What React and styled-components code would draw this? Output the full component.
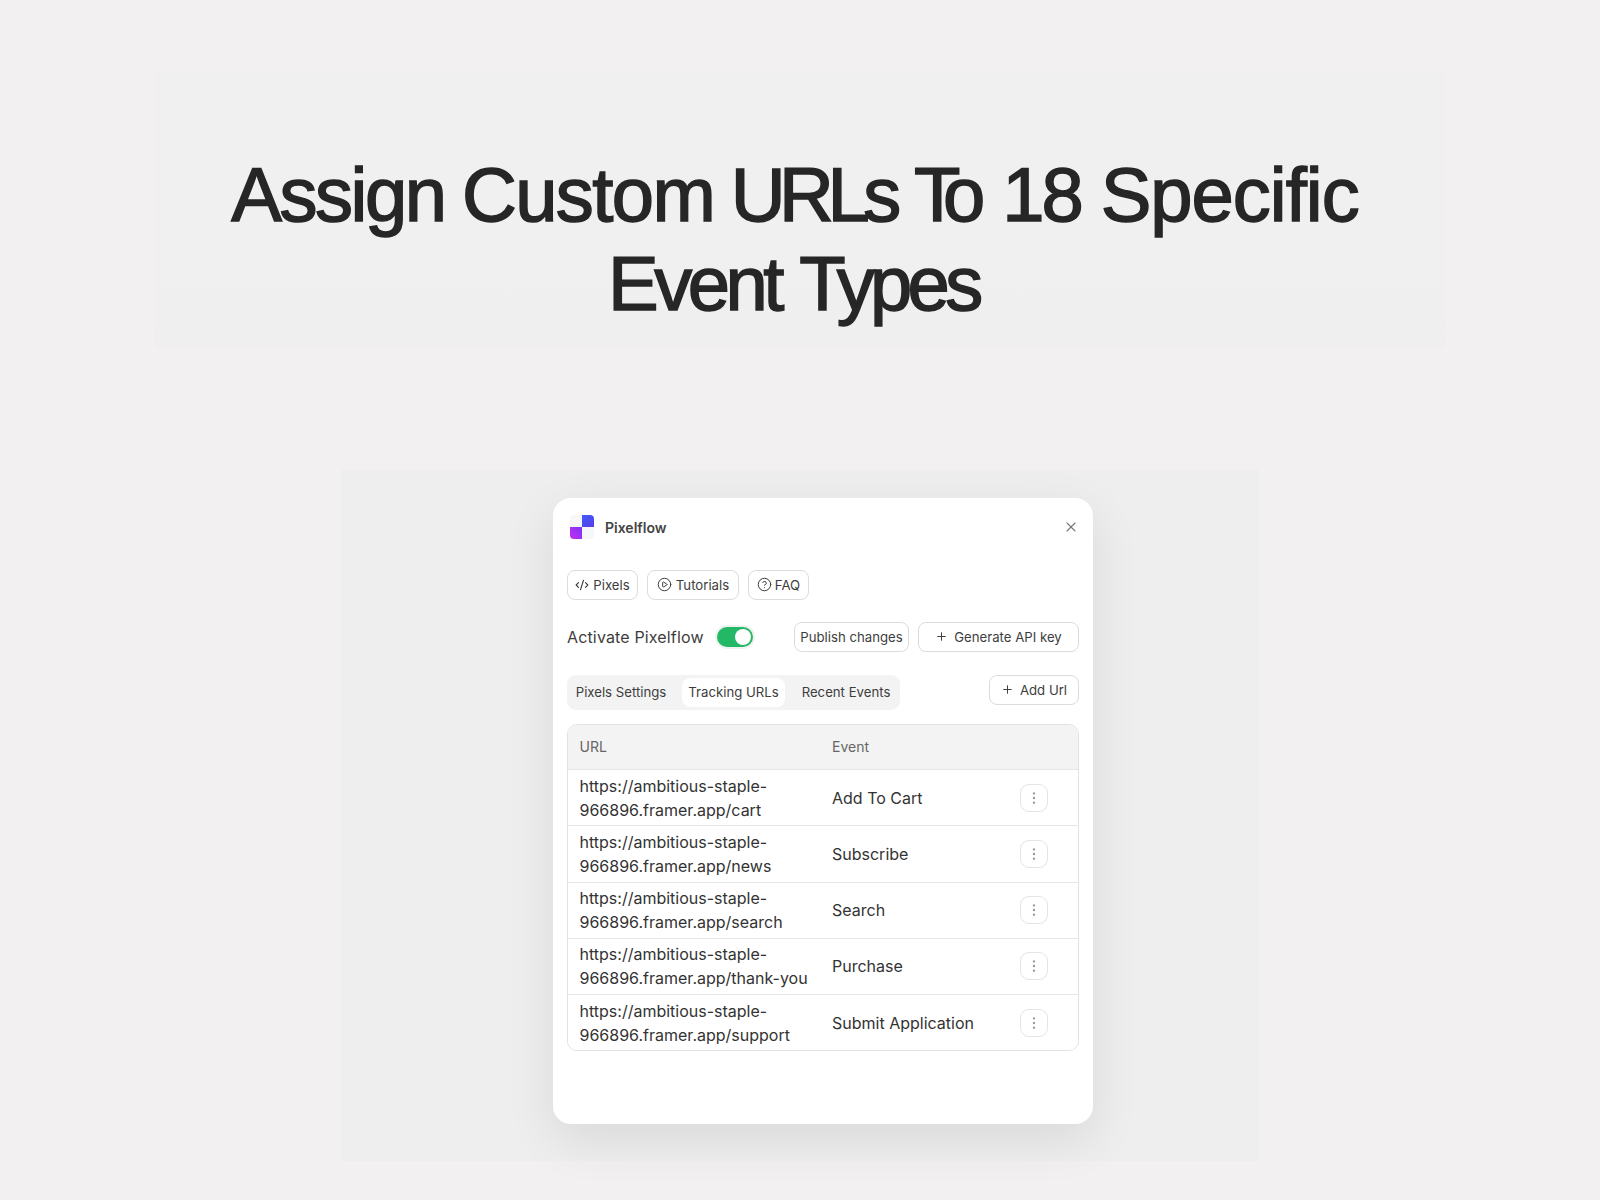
import React from "react";
import styled, { createGlobalStyle } from "styled-components";
import { CodeXml, CirclePlay, CircleHelp, Plus, X, EllipsisVertical } from "lucide-react";

const Global = createGlobalStyle`
  html, body { margin: 0; padding: 0; background: #f2f0f1; }
  * { box-sizing: border-box; }
  body { font-family: Inter, "Liberation Sans", sans-serif; color: #333; }
`;

const Page = styled.div`
  width: 1600px;
  height: 1200px;
  overflow: hidden;
  padding-top: 70px;
  display: flex;
  flex-direction: column;
  align-items: center;
`;

const Hero = styled.section`
  width: 1290px;
  height: 277px;
  padding: 80px 12px 0 0;
  background: linear-gradient(#f0f0f0, #f0f0f0 60%, #efefef);
`;

const Title = styled.h1`
  margin: 0;
  text-align: center;
  font-family: "Liberation Sans", Arial, sans-serif;
  font-weight: 400;
  -webkit-text-stroke: 1.5px #262626;
  font-size: 76px;
  line-height: 89px;
  letter-spacing: -3.1px;
  font-kerning: normal;
  color: #262626;
`;

const Word = styled.span`
  letter-spacing: ${(p) => p.$ls}px;
  margin-right: ${(p) => -3.1 - p.$ls + (p.$extra || 0)}px;
`;

const Stage = styled.section`
  width: 918px;
  height: 691px;
  margin-top: 123px;
  padding: 28px 166px 37px 212px;
  background: #eeeeee;
`;

const Card = styled.div`
  width: 540px;
  height: 626px;
  background: #fff;
  border-radius: 18px;
  padding: 0 14px;
  box-shadow: 0 16px 50px rgba(0, 0, 0, 0.09);
`;

const Header = styled.header`
  height: 58px;
  display: flex;
  align-items: center;
  gap: 11px;
  padding: 0 0 0 3px;
`;

const Brand = styled.span`
  font-size: 14px;
  font-weight: 600;
  color: #444;
  flex: 1;
`;

const Close = styled.span`
  display: flex;
  color: #777;
`;

const Chips = styled.nav`
  margin-top: 14px;
  display: flex;
  gap: 9px;
`;

const Button = styled.button`
  height: 30px;
  width: ${(p) => p.$w}px;
  padding: 0 0 1px;
  display: inline-flex;
  align-items: center;
  justify-content: center;
  gap: ${(p) => p.$gap || 4}px;
  background: #fff;
  border: 1.5px solid #dcdcdc;
  border-radius: 8px;
  font-family: Inter, "Liberation Sans", sans-serif;
  font-size: 13.2px;
  color: #3d3d3d;
`;

const Controls = styled.div`
  margin-top: 22px;
  display: flex;
  align-items: center;
`;

const Label = styled.span`
  font-size: 16px;
  color: #3d3d3d;
  letter-spacing: 0.15px;
  width: 150px;
`;

const Toggle = styled.span`
  width: 36px;
  height: 20px;
  border-radius: 10px;
  background: #22b866;
  box-shadow: 0 0 0 2px #eef3f0;
  display: flex;
  align-items: center;
  justify-content: flex-end;
  padding-right: 2px;
`;

const Knob = styled.span`
  width: 16px;
  height: 16px;
  border-radius: 50%;
  background: #fff;
`;

const Spacer = styled.span`
  flex: 1;
`;

const Actions = styled.div`
  display: flex;
  gap: 9px;
`;

const TabRow = styled.div`
  margin-top: 23px;
  display: flex;
  align-items: flex-start;
  justify-content: space-between;
`;

const Tabs = styled.div`
  width: 333px;
  height: 35px;
  background: #f3f3f3;
  border-radius: 9px;
  padding: 3px;
  display: flex;
  gap: 10px;
`;

const Tab = styled.span`
  height: 29px;
  width: ${(p) => p.$w}px;
  padding-bottom: 1px;
  border-radius: 8px;
  background: ${(p) => (p.$active ? "#fff" : "transparent")};
  display: flex;
  align-items: center;
  justify-content: center;
  font-size: 13.2px;
  color: #3d3d3d;
`;

const Table = styled.div`
  margin-top: 14px;
  width: 512px;
  border: 1.5px solid #e2e2e2;
  border-radius: 10px;
  overflow: hidden;
`;

const Row = styled.div`
  display: grid;
  grid-template-columns: 252.5px 1fr 28px;
  align-items: center;
  height: ${(p) => (p.$head ? 44 : 56.25)}px;
  padding: 0 30px ${(p) => (p.$head ? 2 : 0)}px 11.5px;
  background: ${(p) => (p.$head ? "#f3f3f3" : "#fff")};
  border-top: ${(p) => (p.$first ? "none" : "1.5px solid #e6e6e6")};
`;

const HeadCell = styled.span`
  font-size: 14px;
  color: #666;
`;

const Cell = styled.span`
  font-size: 16px;
  line-height: 24px;
  color: #333;
`;

const More = styled.span`
  width: 28px;
  height: 28px;
  border: 1.5px solid #e4e4e4;
  border-radius: 9px;
  display: flex;
  align-items: center;
  justify-content: center;
  color: #999;
`;

const Logo = () => (
  <svg width="24" height="24" viewBox="0 0 24 24">
    <defs>
      <linearGradient id="lg" x1="0" y1="1" x2="1" y2="0">
        <stop offset="0" stopColor="#c92df0" />
        <stop offset="1" stopColor="#7a35f5" />
      </linearGradient>
      <linearGradient id="lb" x1="0" y1="0" x2="1" y2="1">
        <stop offset="0" stopColor="#3f5cf2" />
        <stop offset="1" stopColor="#5a3df0" />
      </linearGradient>
    </defs>
    <rect x="0" y="0" width="24" height="24" rx="4" fill="#f7f7fa" />
    <path d="M12 0h8a4 4 0 0 1 4 4v8H12z" fill="url(#lb)" />
    <path d="M0 12h12v12H4a4 4 0 0 1-4-4z" fill="url(#lg)" />
  </svg>
);

const rows = [
  ["cart", "Add To Cart"],
  ["news", "Subscribe"],
  ["search", "Search"],
  ["thank-you", "Purchase"],
  ["support", "Submit Application"],
];

export default function App() {
  return (
    <Page>
      <Global />
      <Hero>
        <Title>
          <Word $ls={-2.5}>Assign</Word> <Word $ls={-1.6}>Custom</Word>{" "}
          <Word $ls={-6.5} $extra={-2}>URLs</Word>{" "}
          <Word $ls={-9} $extra={2}>To</Word> <Word $ls={-3.1} $extra={2}>18</Word>{" "}
          <Word $ls={-1}>Specific</Word>
          <br />
          <Word $ls={-4.5}>Event</Word> <Word $ls={-4.7}>Types</Word>
        </Title>
      </Hero>
      <Stage>
        <Card>
          <Header>
            <Logo />
            <Brand>Pixelflow</Brand>
            <Close>
              <X size={16} strokeWidth={1.6} />
            </Close>
          </Header>
          <Chips>
            <Button $w={71}>
              <CodeXml size={14} strokeWidth={2} />
              Pixels
            </Button>
            <Button $w={92}>
              <CirclePlay size={15} strokeWidth={1.6} />
              Tutorials
            </Button>
            <Button $w={61} $gap={3}>
              <CircleHelp size={15} strokeWidth={1.6} />
              FAQ
            </Button>
          </Chips>
          <Controls>
            <Label>Activate Pixelflow</Label>
            <Toggle>
              <Knob />
            </Toggle>
            <Spacer />
            <Actions>
              <Button $w={115}>Publish changes</Button>
              <Button $w={161} $gap={6}>
                <Plus size={13} strokeWidth={1.8} />
                Generate API key
              </Button>
            </Actions>
          </Controls>
          <TabRow>
            <Tabs>
              <Tab $w={102}>Pixels Settings</Tab>
              <Tab $w={103} $active>
                Tracking URLs
              </Tab>
              <Tab $w={102}>Recent Events</Tab>
            </Tabs>
            <Button $w={90} $gap={6}>
              <Plus size={13} strokeWidth={1.8} />
              Add Url
            </Button>
          </TabRow>
          <Table>
            <Row $head $first>
              <HeadCell>URL</HeadCell>
              <HeadCell>Event</HeadCell>
            </Row>
            {rows.map(([slug, event]) => (
              <Row key={slug}>
                <Cell>
                  https://ambitious-staple-
                  <br />
                  966896.framer.app/{slug}
                </Cell>
                <Cell>{event}</Cell>
                <More>
                  <EllipsisVertical size={16} strokeWidth={1.6} />
                </More>
              </Row>
            ))}
          </Table>
        </Card>
      </Stage>
    </Page>
  );
}
